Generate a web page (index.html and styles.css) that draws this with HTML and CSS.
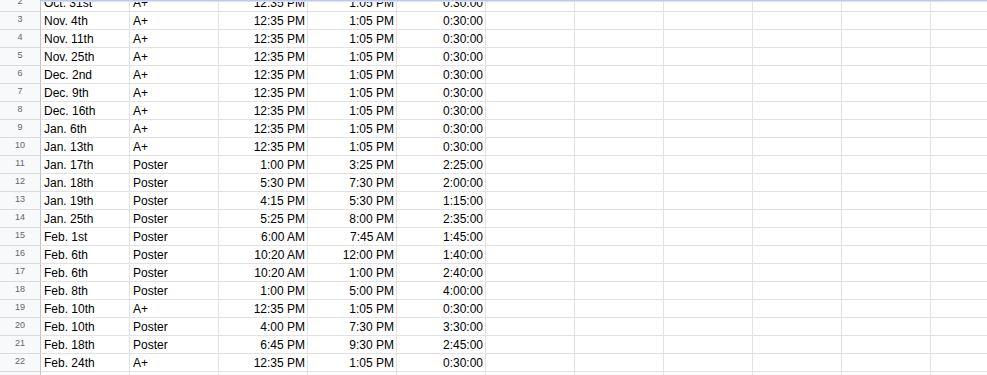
FILE: index.html
```html
<!DOCTYPE html>
<html>
<head>
<meta charset="utf-8">
<link rel="stylesheet" href="styles.css">
</head>
<body>
<div class="viewport">
  <div class="freeze-line"></div>
  <div class="sheet">
    <div class="row"><div class="rh">2</div><div class="c">Oct. 31st</div><div class="c">A+</div><div class="c r">12:35 PM</div><div class="c r">1:05 PM</div><div class="c r">0:30:00</div><div class="c"></div><div class="c"></div><div class="c"></div><div class="c"></div><div class="c"></div><div class="c"></div></div>
    <div class="row"><div class="rh">3</div><div class="c">Nov. 4th</div><div class="c">A+</div><div class="c r">12:35 PM</div><div class="c r">1:05 PM</div><div class="c r">0:30:00</div><div class="c"></div><div class="c"></div><div class="c"></div><div class="c"></div><div class="c"></div><div class="c"></div></div>
    <div class="row"><div class="rh">4</div><div class="c">Nov. 11th</div><div class="c">A+</div><div class="c r">12:35 PM</div><div class="c r">1:05 PM</div><div class="c r">0:30:00</div><div class="c"></div><div class="c"></div><div class="c"></div><div class="c"></div><div class="c"></div><div class="c"></div></div>
    <div class="row"><div class="rh">5</div><div class="c">Nov. 25th</div><div class="c">A+</div><div class="c r">12:35 PM</div><div class="c r">1:05 PM</div><div class="c r">0:30:00</div><div class="c"></div><div class="c"></div><div class="c"></div><div class="c"></div><div class="c"></div><div class="c"></div></div>
    <div class="row"><div class="rh">6</div><div class="c">Dec. 2nd</div><div class="c">A+</div><div class="c r">12:35 PM</div><div class="c r">1:05 PM</div><div class="c r">0:30:00</div><div class="c"></div><div class="c"></div><div class="c"></div><div class="c"></div><div class="c"></div><div class="c"></div></div>
    <div class="row"><div class="rh">7</div><div class="c">Dec. 9th</div><div class="c">A+</div><div class="c r">12:35 PM</div><div class="c r">1:05 PM</div><div class="c r">0:30:00</div><div class="c"></div><div class="c"></div><div class="c"></div><div class="c"></div><div class="c"></div><div class="c"></div></div>
    <div class="row"><div class="rh">8</div><div class="c">Dec. 16th</div><div class="c">A+</div><div class="c r">12:35 PM</div><div class="c r">1:05 PM</div><div class="c r">0:30:00</div><div class="c"></div><div class="c"></div><div class="c"></div><div class="c"></div><div class="c"></div><div class="c"></div></div>
    <div class="row"><div class="rh">9</div><div class="c">Jan. 6th</div><div class="c">A+</div><div class="c r">12:35 PM</div><div class="c r">1:05 PM</div><div class="c r">0:30:00</div><div class="c"></div><div class="c"></div><div class="c"></div><div class="c"></div><div class="c"></div><div class="c"></div></div>
    <div class="row"><div class="rh">10</div><div class="c">Jan. 13th</div><div class="c">A+</div><div class="c r">12:35 PM</div><div class="c r">1:05 PM</div><div class="c r">0:30:00</div><div class="c"></div><div class="c"></div><div class="c"></div><div class="c"></div><div class="c"></div><div class="c"></div></div>
    <div class="row"><div class="rh">11</div><div class="c">Jan. 17th</div><div class="c">Poster</div><div class="c r">1:00 PM</div><div class="c r">3:25 PM</div><div class="c r">2:25:00</div><div class="c"></div><div class="c"></div><div class="c"></div><div class="c"></div><div class="c"></div><div class="c"></div></div>
    <div class="row"><div class="rh">12</div><div class="c">Jan. 18th</div><div class="c">Poster</div><div class="c r">5:30 PM</div><div class="c r">7:30 PM</div><div class="c r">2:00:00</div><div class="c"></div><div class="c"></div><div class="c"></div><div class="c"></div><div class="c"></div><div class="c"></div></div>
    <div class="row"><div class="rh">13</div><div class="c">Jan. 19th</div><div class="c">Poster</div><div class="c r">4:15 PM</div><div class="c r">5:30 PM</div><div class="c r">1:15:00</div><div class="c"></div><div class="c"></div><div class="c"></div><div class="c"></div><div class="c"></div><div class="c"></div></div>
    <div class="row"><div class="rh">14</div><div class="c">Jan. 25th</div><div class="c">Poster</div><div class="c r">5:25 PM</div><div class="c r">8:00 PM</div><div class="c r">2:35:00</div><div class="c"></div><div class="c"></div><div class="c"></div><div class="c"></div><div class="c"></div><div class="c"></div></div>
    <div class="row"><div class="rh">15</div><div class="c">Feb. 1st</div><div class="c">Poster</div><div class="c r">6:00 AM</div><div class="c r">7:45 AM</div><div class="c r">1:45:00</div><div class="c"></div><div class="c"></div><div class="c"></div><div class="c"></div><div class="c"></div><div class="c"></div></div>
    <div class="row"><div class="rh">16</div><div class="c">Feb. 6th</div><div class="c">Poster</div><div class="c r">10:20 AM</div><div class="c r">12:00 PM</div><div class="c r">1:40:00</div><div class="c"></div><div class="c"></div><div class="c"></div><div class="c"></div><div class="c"></div><div class="c"></div></div>
    <div class="row"><div class="rh">17</div><div class="c">Feb. 6th</div><div class="c">Poster</div><div class="c r">10:20 AM</div><div class="c r">1:00 PM</div><div class="c r">2:40:00</div><div class="c"></div><div class="c"></div><div class="c"></div><div class="c"></div><div class="c"></div><div class="c"></div></div>
    <div class="row"><div class="rh">18</div><div class="c">Feb. 8th</div><div class="c">Poster</div><div class="c r">1:00 PM</div><div class="c r">5:00 PM</div><div class="c r">4:00:00</div><div class="c"></div><div class="c"></div><div class="c"></div><div class="c"></div><div class="c"></div><div class="c"></div></div>
    <div class="row"><div class="rh">19</div><div class="c">Feb. 10th</div><div class="c">A+</div><div class="c r">12:35 PM</div><div class="c r">1:05 PM</div><div class="c r">0:30:00</div><div class="c"></div><div class="c"></div><div class="c"></div><div class="c"></div><div class="c"></div><div class="c"></div></div>
    <div class="row"><div class="rh">20</div><div class="c">Feb. 10th</div><div class="c">Poster</div><div class="c r">4:00 PM</div><div class="c r">7:30 PM</div><div class="c r">3:30:00</div><div class="c"></div><div class="c"></div><div class="c"></div><div class="c"></div><div class="c"></div><div class="c"></div></div>
    <div class="row"><div class="rh">21</div><div class="c">Feb. 18th</div><div class="c">Poster</div><div class="c r">6:45 PM</div><div class="c r">9:30 PM</div><div class="c r">2:45:00</div><div class="c"></div><div class="c"></div><div class="c"></div><div class="c"></div><div class="c"></div><div class="c"></div></div>
    <div class="row"><div class="rh">22</div><div class="c">Feb. 24th</div><div class="c">A+</div><div class="c r">12:35 PM</div><div class="c r">1:05 PM</div><div class="c r">0:30:00</div><div class="c"></div><div class="c"></div><div class="c"></div><div class="c"></div><div class="c"></div><div class="c"></div></div>
    <div class="row"><div class="rh">23</div><div class="c"></div><div class="c"></div><div class="c r"></div><div class="c r"></div><div class="c r"></div><div class="c"></div><div class="c"></div><div class="c"></div><div class="c"></div><div class="c"></div><div class="c"></div></div>
  </div>
</div>
</body>
</html>
```

FILE: styles.css
```css
html, body {
  margin: 0;
  padding: 0;
  background: #ffffff;
}

.viewport {
  position: relative;
  width: 987px;
  height: 375px;
  overflow: hidden;
  font-family: "Liberation Sans", Arial, sans-serif;
}

.freeze-line {
  position: absolute;
  left: 41px;
  right: 0;
  top: 0;
  height: 2px;
  background: linear-gradient(#bccbec 0 1px, #dbe3f5 1px 2px);
  z-index: 2;
}

.sheet {
  display: flex;
  flex-direction: column;
  margin-top: -6px;
}

.row {
  display: grid;
  grid-template-columns: 41px repeat(11, 89px);
  height: 18px;
}

.rh {
  box-sizing: border-box;
  height: 18px;
  border-right: 1px solid #c4c4c4;
  border-bottom: 1px solid #dcdcdc;
  background: #f8f9fa;
  color: #666666;
  font-size: 9px;
  line-height: 15px;
  text-align: center;
}

.c {
  box-sizing: border-box;
  height: 18px;
  border-right: 1px solid #e2e2e2;
  border-bottom: 1px solid #e2e2e2;
  padding: 1px 2px 0 3px;
  font-size: 12px;
  line-height: 16px;
  color: #000000;
  white-space: nowrap;
  overflow: hidden;
}

.r {
  text-align: right;
}
```
